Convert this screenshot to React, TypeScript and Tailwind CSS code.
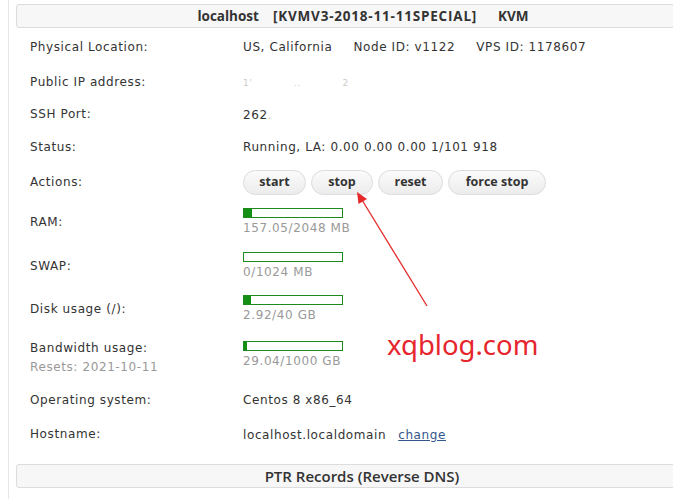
import React from 'react';

const body = { fontFamily: '"DejaVu Sans", Verdana, sans-serif' };
const head = { fontFamily: '"Open Sans", Arial, sans-serif' };

function Bar({ pct }: { pct: number }) {
  return (
    <div className="w-[100px] h-[10px] border border-[#1d8a1d] bg-white">
      <div className="h-full bg-[#139013]" style={{ width: `${pct}%` }} />
    </div>
  );
}

function Row({ label, h, children, sub, lp = '' }: { label: string; h: string; children: React.ReactNode; sub?: string; lp?: string }) {
  return (
    <div className={`flex items-center ${h}`}>
      <div className={`w-[227px] pl-[14px] leading-[19px] ${lp}`}>
        <div>{label}</div>
        {sub && <div className="text-[#999]">{sub}</div>}
      </div>
      <div className="flex-1">{children}</div>
    </div>
  );
}

function Usage({ pct, text }: { pct: number; text: string }) {
  return (
    <div className="flex flex-col gap-[2px]">
      <Bar pct={pct} />
      <div className="text-[#999] leading-[16px]">{text}</div>
    </div>
  );
}

function Btn({ children, w }: { children: React.ReactNode; w: string }) {
  return (
    <button
      className={`${w} h-[25px] rounded-full border border-[#dcdcdc] bg-gradient-to-b from-[#fbfbfb] to-[#ececec] text-[12.5px] font-bold text-[#333] tracking-normal`}
      style={head}
    >
      {children}
    </button>
  );
}

export default function App() {
  return (
    <div className="w-[673px] h-[499px] overflow-hidden bg-white relative">
      <div
        className="ml-[8px] h-full border-l border-[#e6e6e6] pl-[7px] pt-[4px] text-[12px] tracking-[0.6px] text-[#333]"
        style={body}
      >
        <div className="w-[680px] h-[24px] border border-[#dcdcdc] rounded-[3px] bg-[#f7f7f7] flex items-center justify-center pl-[14px]">
          <div className="flex text-[13.5px] font-bold tracking-normal text-[#333]" style={head}>
            <span>localhost</span>
            <span className="ml-[14px] tracking-[0.8px]">[KVMV3-2018-11-11SPECIAL]</span>
            <span className="ml-[21px]">KVM</span>
          </div>
        </div>

        <Row label="Physical Location:" h="h-[38px]">
          <div className="flex gap-[21px]">
            <span>US, California</span>
            <span>Node ID: v1122</span>
            <span>VPS ID: 1178607</span>
          </div>
        </Row>
        <Row label="Public IP address:" h="h-[32px]">
          <span className="text-[#ccc] text-[9px] whitespace-pre">{'1\'            ..            2'}</span>
        </Row>
        <Row label="SSH Port:" h="h-[33px]">
          <span>262<span className="text-[#ccc]">.</span></span>
        </Row>
        <Row label="Status:" h="h-[32px]">
          <span>Running, LA: 0.00 0.00 0.00 1/101 918</span>
        </Row>
        <Row label="Actions:" h="h-[38px]">
          <div className="flex gap-[5px]">
            <Btn w="w-[63px]">start</Btn>
            <Btn w="w-[62px]">stop</Btn>
            <Btn w="w-[65px]">reset</Btn>
            <Btn w="w-[98px]">force stop</Btn>
          </div>
        </Row>
        <Row label="RAM:" h="h-[42px]">
          <Usage pct={8} text="157.05/2048 MB" />
        </Row>
        <Row label="SWAP:" h="h-[46px]">
          <Usage pct={0} text="0/1024 MB" />
        </Row>
        <Row label="Disk usage (/):" h="h-[40px]">
          <Usage pct={7} text="2.92/40 GB" />
        </Row>
        <Row label="Bandwidth usage:" sub="Resets: 2021-10-11" h="h-[52px]" lp="pt-[6px]">
          <Usage pct={3} text="29.04/1000 GB" />
        </Row>
        <Row label="Operating system:" h="h-[32px] mt-[3px]">
          <span>Centos 8 x86_64</span>
        </Row>
        <Row label="Hostname:" h="h-[37px]">
          <span>
            localhost.localdomain
            <a className="ml-[12px] text-[#33558a] underline">change</a>
          </span>
        </Row>

        <div className="mt-[11px] w-[680px] h-[24px] border border-[#dcdcdc] rounded-[3px] bg-[#f7f7f7] flex items-center justify-center pl-[12px]">
          <span className="text-[15px] font-semibold tracking-normal text-[#333]" style={head}>
            PTR Records (Reverse DNS)
          </span>
        </div>
      </div>

      <svg className="absolute left-0 top-0 pointer-events-none" width="673" height="499">
        <line x1="427" y1="306" x2="362" y2="200" stroke="#e42a2a" strokeWidth="1.3" />
        <polygon points="357,192 358.5,204 367,199" fill="#e42a2a" />
      </svg>
      <div
        className="absolute left-[387px] top-[328px] text-[27.5px] leading-[34px] text-[#e6252d]"
        style={{ fontFamily: '"Noto Sans", "DejaVu Sans", sans-serif' }}
      >
        xqblog.com
      </div>
    </div>
  );
}
